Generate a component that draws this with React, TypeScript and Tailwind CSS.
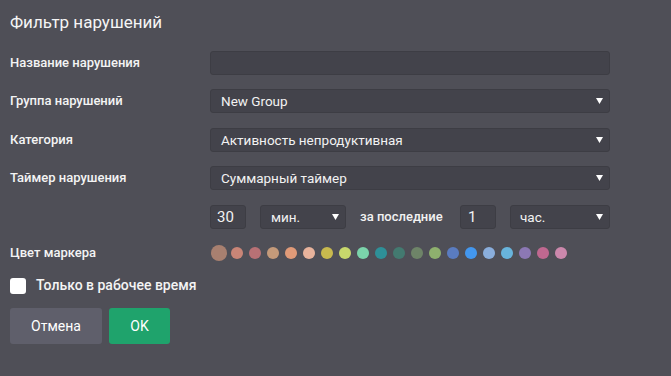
import { useState } from "react";

const colors = [
    "#a88070", "#c98577", "#b87175", "#c49a7a", "#e09a78",
    "#e8b39c", "#c8b94e", "#c8d86c", "#7bd4ab", "#2e9098",
    "#437a70", "#6e8468", "#8eb06e", "#5a7cc0", "#4397ee",
    "#8aaedc", "#68b4dc", "#8c78b4", "#c06890", "#cc88ac",
];

function Arrow() {
    return (
        <svg width="7" height="6" viewBox="0 0 7 6" className="shrink-0">
            <path d="M0 0 H7 L3.5 6 Z" fill="#ffffff" />
        </svg>
    );
}

function Select({ value, className }: { value: string, className: string }) {
    return (
        <div className={`flex items-center justify-between h-[24px] rounded-[3px] bg-[#43434b] border border-[#3d3d44] text-[13.5px] text-[#f2f2f2] pr-[6px] ${className}`}>
            <span>{value}</span>
            <Arrow />
        </div>
    );
}

function Row({ label, children, className }: { label: string, children: React.ReactNode, className: string }) {
    return (
        <div className={`flex items-center ${className}`}>
            <div className="w-[200px] text-[13px] font-medium text-[#f4f4f4]">{label}</div>
            {children}
        </div>
    );
}

export default function App() {
    const [selected, setSelected] = useState(0);
    const [workOnly, setWorkOnly] = useState(false);

    return (
        <div className="w-full h-[376px] bg-[#4f4f57] pl-[10px] pt-[11px]" style={{ fontFamily: "Roboto, 'Noto Sans', sans-serif" }}>
            <h2 className="text-[17px] leading-[22px] text-[#f5f5f5]">Фильтр нарушений</h2>

            <Row label="Название нарушения" className="mt-[18px]">
                <div className="w-[400px] h-[24px] rounded-[3px] bg-[#43434b] border border-[#3d3d44]" />
            </Row>
            <Row label="Группа нарушений" className="mt-[14px]">
                <Select value="New Group" className="w-[400px] pl-[10px]" />
            </Row>
            <Row label="Категория" className="mt-[15px]">
                <Select value="Активность непродуктивная" className="w-[400px] pl-[10px]" />
            </Row>
            <Row label="Таймер нарушения" className="mt-[14px]">
                <Select value="Суммарный таймер" className="w-[400px] pl-[10px]" />
            </Row>

            <div className="flex items-center ml-[200px] mt-[15px] text-[14px] text-[#f2f2f2]">
                <div className="w-[36px] h-[24px] rounded-[3px] bg-[#43434b] border border-[#3d3d44] flex items-center pl-[6px] text-[15px]">30</div>
                <Select value="мин." className="w-[86px] ml-[14px] pl-[10px]" />
                <span className="ml-[14px] text-[13px] font-medium w-[100px]">за последние</span>
                <div className="w-[36px] h-[24px] rounded-[3px] bg-[#43434b] border border-[#3d3d44] flex items-center pl-[7px] text-[15px]">1</div>
                <Select value="час." className="w-[100px] ml-[14px] pl-[9px]" />
            </div>

            <Row label="Цвет маркера" className="mt-[16px] h-[16px]">
                <div className="flex items-center">
                    {colors.map((c, i) => (
                        <button
                            key={c}
                            onClick={() => setSelected(i)}
                            className={`rounded-full shrink-0 ${i === selected ? "w-[16px] h-[16px] ml-[1px] mr-[4px]" : "w-[12px] h-[12px] mr-[6px]"}`}
                            style={{ backgroundColor: c }}
                        />
                    ))}
                </div>
            </Row>

            <label className="flex items-center mt-[14px] cursor-pointer">
                <span
                    onClick={() => setWorkOnly(!workOnly)}
                    className="w-[16px] h-[16px] rounded-[3px] bg-white shrink-0"
                />
                <span className="ml-[10px] text-[14px] font-medium text-[#f4f4f4]">Только в рабочее время</span>
            </label>

            <div className="flex mt-[12px] gap-[7px]">
                <button className="w-[92px] h-[36px] rounded-[3px] bg-[#5f5f6b] text-[14px] text-white">Отмена</button>
                <button className="w-[61px] h-[36px] rounded-[3px] bg-[#1fa36c] text-[14px] text-white">OK</button>
            </div>
        </div>
    );
}
